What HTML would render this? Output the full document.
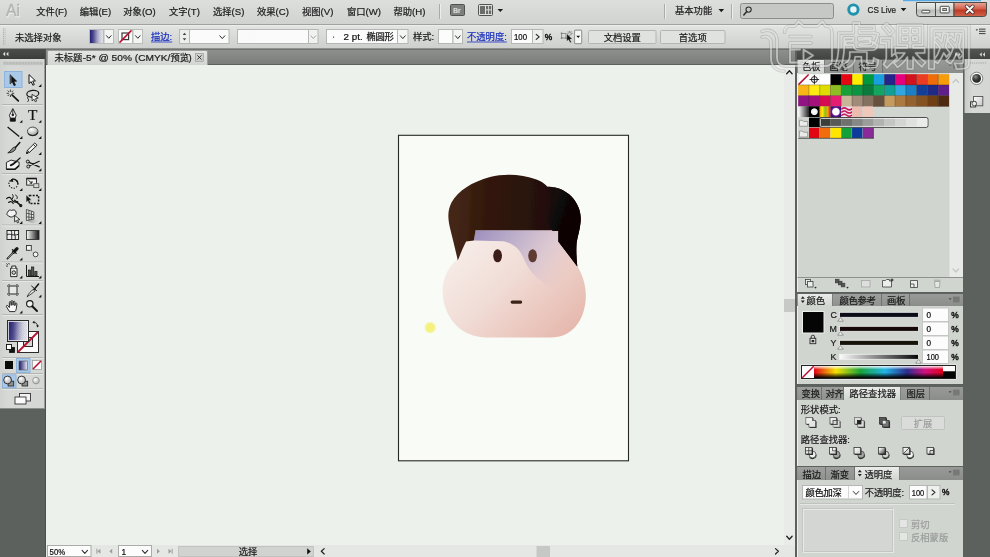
<!DOCTYPE html>
<html lang="zh-CN"><head><meta charset="utf-8"><title>Adobe Illustrator - 未标题-5* @ 50% (CMYK/预览)</title>
<style>
html,body{margin:0;padding:0;}
body{width:990px;height:557px;overflow:hidden;position:relative;background:#edf0ec;font-family:"Liberation Sans",sans-serif;font-size:9.3px;}
#app div{position:absolute;box-sizing:border-box;}
#ov{position:absolute;left:0;top:0;width:990px;height:557px;opacity:.999;will-change:transform;}
#ov text{font-family:"Liberation Sans","Noto Sans CJK SC",sans-serif;}
</style></head><body>
<div id="app">
<div style="left:0px;top:0px;width:990px;height:25px;background:linear-gradient(#dcdfdc,#d0d3d0);border-bottom:1px solid #9fa29f;"></div>
<div style="left:0px;top:25px;width:990px;height:24px;background:linear-gradient(#e1e4e1,#d3d6d3 70%,#cdd0cd);border-top:1px solid #eceeec;border-bottom:1px solid #8e918e;"></div>
<div style="left:0px;top:49px;width:797px;height:16px;background:linear-gradient(#8c8f8c,#838683 50%,#7a7d7a);border-top:1px solid #707370;border-bottom:1px solid #5c5f5c;"></div>
<div style="left:47px;top:50px;width:161px;height:15px;background:linear-gradient(#e2e5e2,#d2d5d2);border:1px solid #9b9e9b;border-bottom:none;border-radius:2px 2px 0 0;"></div>
<div style="left:47px;top:65px;width:737px;height:481px;background:#edf1ec;"></div>
<div style="left:784px;top:65px;width:11px;height:481px;background:#e8ebe7;"></div>
<div style="left:784px;top:299px;width:11px;height:12.5px;background:#c6c9c6;"></div>
<div style="left:795px;top:49px;width:2px;height:508px;background:#5d605d;"></div>
<div style="left:46px;top:545px;width:749px;height:12px;background:#e4e7e3;"></div>
<div style="left:797px;top:49px;width:193px;height:508px;background:#5d615d;"></div>
<div style="left:797px;top:49px;width:167px;height:10px;background:linear-gradient(#525552,#414441);"></div>
<div style="left:964px;top:49px;width:26px;height:10px;background:linear-gradient(#525552,#414441);border-left:1px solid #2e302e;"></div>
<div style="left:964px;top:59px;width:26px;height:54px;background:linear-gradient(90deg,#c9ccc9,#d6d9d6 30%,#d3d6d3);border-left:1px solid #8d908d;"></div>
<div style="left:797px;top:59px;width:166px;height:14px;background:linear-gradient(#979a97,#8a8d8a);border-top:1px solid #5f625f;"></div>
<div style="left:798px;top:60px;width:27px;height:13px;background:linear-gradient(#e9ece9,#d1d5d0);border-right:1px solid #7c7f7c;"></div>
<div style="left:825px;top:60px;width:29px;height:13px;background:linear-gradient(#9c9f9c,#8e918e);border-right:1px solid #6f726f;"></div>
<div style="left:854px;top:60px;width:29px;height:13px;background:linear-gradient(#9c9f9c,#8e918e);border-right:1px solid #6f726f;"></div>
<div style="left:797px;top:73px;width:166px;height:204px;background:#d1d5d0;border-left:1px solid #eef0ee;"></div>
<div style="left:949px;top:73px;width:14px;height:204px;background:#e7eae7;border-left:1px solid #dcdfdc;"></div>
<div style="left:797px;top:277px;width:166px;height:15px;background:#d1d5d0;border-top:1px solid #8e918e;border-left:1px solid #eef0ee;"></div>
<div style="left:797px;top:293px;width:166px;height:13px;background:linear-gradient(#979a97,#8a8d8a);border-top:1px solid #5f625f;"></div>
<div style="left:798px;top:294px;width:35px;height:12px;background:linear-gradient(#e9ece9,#d1d5d0);border-right:1px solid #7c7f7c;"></div>
<div style="left:833px;top:294px;width:49px;height:12px;background:linear-gradient(#9c9f9c,#8e918e);border-right:1px solid #6f726f;"></div>
<div style="left:882px;top:294px;width:28px;height:12px;background:linear-gradient(#9c9f9c,#8e918e);border-right:1px solid #6f726f;"></div>
<div style="left:797px;top:306px;width:166px;height:78px;background:#d1d5d0;border-left:1px solid #eef0ee;"></div>
<div style="left:797px;top:386px;width:166px;height:14px;background:linear-gradient(#979a97,#8a8d8a);border-top:1px solid #5f625f;"></div>
<div style="left:798px;top:387px;width:23.5px;height:13px;background:linear-gradient(#9c9f9c,#8e918e);border-right:1px solid #6f726f;"></div>
<div style="left:821.5px;top:387px;width:22.5px;height:13px;background:linear-gradient(#9c9f9c,#8e918e);border-right:1px solid #6f726f;"></div>
<div style="left:844px;top:387px;width:57px;height:13px;background:linear-gradient(#e9ece9,#d1d5d0);border-right:1px solid #7c7f7c;"></div>
<div style="left:901px;top:387px;width:28.5px;height:13px;background:linear-gradient(#9c9f9c,#8e918e);border-right:1px solid #6f726f;"></div>
<div style="left:797px;top:400px;width:166px;height:66px;background:#d1d5d0;border-left:1px solid #eef0ee;"></div>
<div style="left:797px;top:466px;width:166px;height:14px;background:linear-gradient(#979a97,#8a8d8a);border-top:1px solid #5f625f;"></div>
<div style="left:798px;top:467px;width:28px;height:13px;background:linear-gradient(#9c9f9c,#8e918e);border-right:1px solid #6f726f;"></div>
<div style="left:826px;top:467px;width:29px;height:13px;background:linear-gradient(#9c9f9c,#8e918e);border-right:1px solid #6f726f;"></div>
<div style="left:855px;top:467px;width:45px;height:13px;background:linear-gradient(#e9ece9,#d1d5d0);border-right:1px solid #7c7f7c;"></div>
<div style="left:797px;top:480px;width:166px;height:77px;background:#d1d5d0;border-left:1px solid #eef0ee;"></div>
<div style="left:0px;top:49px;width:46px;height:508px;background:#5d615d;border-right:1px solid #4c4f4c;"></div>
<div style="left:0px;top:49px;width:45px;height:10px;background:linear-gradient(#4a4d4a,#3a3d3a);"></div>
<div style="left:0px;top:59px;width:45px;height:349.5px;background:linear-gradient(90deg,#cfd2cf,#d6d9d6 20%,#d4d7d4);border-right:1px solid #9b9e9b;border-bottom:1px solid #8b8e8b;"></div>
</div>
<svg id="ov" width="990" height="557" viewBox="0 0 990 557">
<defs><linearGradient id="wb" x1="0" y1="0" x2="0" y2="1"><stop offset="0" stop-color="#eef0ee"/><stop offset=".48" stop-color="#d2d5d2"/><stop offset=".52" stop-color="#b9bcb9"/><stop offset="1" stop-color="#cfd2cf"/></linearGradient><linearGradient id="wc" x1="0" y1="0" x2="0" y2="1"><stop offset="0" stop-color="#e9a99b"/><stop offset=".45" stop-color="#d4604b"/><stop offset=".55" stop-color="#c03a25"/><stop offset="1" stop-color="#d0664f"/></linearGradient><linearGradient id="gn" x1="0" y1="0" x2="1" y2="0"><stop offset="0" stop-color="#1d1870"/><stop offset=".45" stop-color="#6d6aa3"/><stop offset="1" stop-color="#eeeeF4"/></linearGradient><pattern id="chk" width="2.400" height="2.400" patternUnits="userSpaceOnUse"><rect width="2.400" height="2.400" fill="#fff"/><rect width="1.200" height="1.200" fill="#b9bbc4"/><rect x="1.200" y="1.200" width="1.200" height="1.200" fill="#b9bbc4"/></pattern><linearGradient id="chkf" x1="0" x2="1"><stop offset=".25" stop-color="#fff" stop-opacity="0"/><stop offset="1" stop-color="#fff" stop-opacity="1"/></linearGradient><mask id="chkm" maskContentUnits="objectBoundingBox"><rect width="1" height="1" fill="url(#chkf)"/></mask><linearGradient id="skin" gradientUnits="userSpaceOnUse" x1="462" y1="236" x2="560" y2="340"><stop offset="0" stop-color="#f7eeea"/><stop offset=".45" stop-color="#f1dcd6"/><stop offset="1" stop-color="#e6b9ae"/></linearGradient><linearGradient id="hair" gradientUnits="userSpaceOnUse" x1="448" y1="210" x2="581" y2="215"><stop offset="0" stop-color="#452716"/><stop offset=".14" stop-color="#402312"/><stop offset=".2" stop-color="#361b0e"/><stop offset=".45" stop-color="#2d150b"/><stop offset=".72" stop-color="#251009"/><stop offset=".85" stop-color="#160a0a"/><stop offset="1" stop-color="#0c0606"/></linearGradient><radialGradient id="hairhi" gradientUnits="userSpaceOnUse" cx="500" cy="200" r="52" gradientTransform="translate(500 200) scale(1 .62) translate(-500 -200)"><stop offset="0" stop-color="#3a1b0c" stop-opacity=".0"/><stop offset=".8" stop-color="#2a1209" stop-opacity=".55"/><stop offset="1" stop-color="#2a1209" stop-opacity="0"/></radialGradient><linearGradient id="lav" gradientUnits="userSpaceOnUse" x1="476" y1="232" x2="560" y2="290"><stop offset="0" stop-color="#9e90be"/><stop offset=".35" stop-color="#bfb0cb"/><stop offset=".7" stop-color="#dac6d0" stop-opacity=".8"/><stop offset="1" stop-color="#e8c4c0" stop-opacity="0"/></linearGradient><linearGradient id="hairR" gradientUnits="userSpaceOnUse" x1="545" y1="205" x2="572" y2="215"><stop offset="0" stop-color="#190b0a" stop-opacity=".7"/><stop offset=".3" stop-color="#120808" stop-opacity=".95"/><stop offset="1" stop-color="#0a0505"/></linearGradient><radialGradient id="ydot"><stop offset="0" stop-color="#f4f078"/><stop offset=".7" stop-color="#f5f285"/><stop offset="1" stop-color="#f7f5b0" stop-opacity=".15"/></radialGradient><filter id="soft" x="-5%" y="-5%" width="110%" height="110%"><feGaussianBlur stdDeviation=".45"/></filter><radialGradient id="sph" cx=".38" cy=".32" r=".75"><stop offset="0" stop-color="#8e918e"/><stop offset=".45" stop-color="#3c3e3c"/><stop offset="1" stop-color="#151515"/></radialGradient><linearGradient id="dk2" x1="0" y1="0" x2="1" y2="1"><stop offset="0" stop-color="#ffffff"/><stop offset="1" stop-color="#c3c6c3"/></linearGradient><linearGradient id="s41" x1="0" x2="1"><stop offset="0" stop-color="#fff"/><stop offset="1" stop-color="#222"/></linearGradient><radialGradient id="s42"><stop offset="0" stop-color="#fff"/><stop offset=".55" stop-color="#f0f0f0"/><stop offset=".7" stop-color="#000"/><stop offset="1" stop-color="#000"/></radialGradient><linearGradient id="s43" x1="0" x2="1"><stop offset="0" stop-color="#f7a600"/><stop offset=".25" stop-color="#fdea10"/><stop offset=".5" stop-color="#8dbd22"/><stop offset=".75" stop-color="#f7a600"/><stop offset="1" stop-color="#e2001a"/></linearGradient><radialGradient id="s44"><stop offset="0" stop-color="#fff"/><stop offset=".6" stop-color="#fff"/><stop offset=".8" stop-color="#6a1a96"/><stop offset="1" stop-color="#3c0f74"/></radialGradient><linearGradient id="kk" x1="0" x2="1"><stop offset="0" stop-color="#fcfcfc"/><stop offset="1" stop-color="#050505"/></linearGradient><linearGradient id="spec" x1="0" x2="1"><stop offset="0" stop-color="#e2001a"/><stop offset=".17" stop-color="#f5e100"/><stop offset=".36" stop-color="#19a33a"/><stop offset=".55" stop-color="#21b4e6"/><stop offset=".72" stop-color="#2b2e8c"/><stop offset=".86" stop-color="#d1117f"/><stop offset="1" stop-color="#e2001a"/></linearGradient><linearGradient id="specv" x1="0" x2="0" y1="0" y2="1"><stop offset="0" stop-color="#fff" stop-opacity=".9"/><stop offset=".3" stop-color="#fff" stop-opacity="0"/><stop offset=".55" stop-color="#000" stop-opacity="0"/><stop offset="1" stop-color="#000" stop-opacity="1"/></linearGradient><linearGradient id="sqg" x1="0" y1="0" x2="1" y2="1"><stop offset="0" stop-color="#ffffff"/><stop offset="1" stop-color="#c9ccc9"/></linearGradient><linearGradient id="crp" x1="0" y1="0" x2="1" y2="1"><stop offset=".2" stop-color="#f4f4f4"/><stop offset="1" stop-color="#333"/></linearGradient><linearGradient id="arr" x1="0" x2="1"><stop offset="0" stop-color="#777"/><stop offset=".35" stop-color="#111"/></linearGradient><radialGradient id="ell" cx=".38" cy=".3" r=".8"><stop offset="0" stop-color="#ffffff"/><stop offset=".55" stop-color="#c8cac8"/><stop offset="1" stop-color="#7e807e"/></radialGradient><linearGradient id="pgf" x1="0" x2="1"><stop offset="0" stop-color="#8a8c8a"/><stop offset="1" stop-color="#c9ccc9" stop-opacity=".2"/></linearGradient><linearGradient id="tg" x1="0" x2="1"><stop offset="0" stop-color="#fdfdfd"/><stop offset="1" stop-color="#111"/></linearGradient><linearGradient id="gf" x1="0" y1=".1" x2="1" y2=".2"><stop offset="0" stop-color="#1a1668"/><stop offset=".4" stop-color="#5a5796"/><stop offset=".8" stop-color="#c8c7dc"/><stop offset="1" stop-color="#eeeef4"/></linearGradient><linearGradient id="gb" x1="0" x2="1"><stop offset="0" stop-color="#1a1668"/><stop offset="1" stop-color="#eeeef4"/></linearGradient><radialGradient id="dm" cx=".35" cy=".3" r=".8"><stop offset="0" stop-color="#fff"/><stop offset="1" stop-color="#a9aba9"/></radialGradient></defs>
<text x="6.6" y="16.9" font-size="16" fill="#f3f5f3" stroke="#f3f5f3" stroke-width=".5" textLength="14" lengthAdjust="spacingAndGlyphs">Ai</text>
<text x="6" y="16.3" font-size="16" fill="#b3b6b3" stroke="#b3b6b3" stroke-width=".5" textLength="14" lengthAdjust="spacingAndGlyphs">Ai</text>
<g fill="#1c1c1c"><text x="36.30 45.60" y="15.40" font-size="9.3" stroke="#1c1c1c" stroke-width=".22">文件</text><text x="54.90" y="15.40" font-size="9.6" stroke="#1c1c1c" stroke-width=".22" xml:space="preserve">(F)</text></g>
<g fill="#1c1c1c"><text x="79.80 89.10" y="15.40" font-size="9.3" stroke="#1c1c1c" stroke-width=".22">编辑</text><text x="98.40" y="15.40" font-size="9.6" stroke="#1c1c1c" stroke-width=".22" xml:space="preserve">(E)</text></g>
<g fill="#1c1c1c"><text x="123.30 132.60" y="15.40" font-size="9.3" stroke="#1c1c1c" stroke-width=".22">对象</text><text x="141.90" y="15.40" font-size="9.6" stroke="#1c1c1c" stroke-width=".22" xml:space="preserve">(O)</text></g>
<g fill="#1c1c1c"><text x="169.00 178.30" y="15.40" font-size="9.3" stroke="#1c1c1c" stroke-width=".22">文字</text><text x="187.60" y="15.40" font-size="9.6" stroke="#1c1c1c" stroke-width=".22" xml:space="preserve">(T)</text></g>
<g fill="#1c1c1c"><text x="213.00 222.30" y="15.40" font-size="9.3" stroke="#1c1c1c" stroke-width=".22">选择</text><text x="231.60" y="15.40" font-size="9.6" stroke="#1c1c1c" stroke-width=".22" xml:space="preserve">(S)</text></g>
<g fill="#1c1c1c"><text x="257.00 266.30" y="15.40" font-size="9.3" stroke="#1c1c1c" stroke-width=".22">效果</text><text x="275.60" y="15.40" font-size="9.6" stroke="#1c1c1c" stroke-width=".22" xml:space="preserve">(C)</text></g>
<g fill="#1c1c1c"><text x="302.00 311.30" y="15.40" font-size="9.3" stroke="#1c1c1c" stroke-width=".22">视图</text><text x="320.60" y="15.40" font-size="9.6" stroke="#1c1c1c" stroke-width=".22" xml:space="preserve">(V)</text></g>
<g fill="#1c1c1c"><text x="347.00 356.30" y="15.40" font-size="9.3" stroke="#1c1c1c" stroke-width=".22">窗口</text><text x="365.60" y="15.40" font-size="9.6" stroke="#1c1c1c" stroke-width=".22" xml:space="preserve">(W)</text></g>
<g fill="#1c1c1c"><text x="393.50 402.80" y="15.40" font-size="9.3" stroke="#1c1c1c" stroke-width=".22">帮助</text><text x="412.10" y="15.40" font-size="9.6" stroke="#1c1c1c" stroke-width=".22" xml:space="preserve">(H)</text></g>
<line x1="439.5" y1="4" x2="439.5" y2="19" stroke="#a9aca9" stroke-width="1"/>
<line x1="440.5" y1="4" x2="440.5" y2="19" stroke="#eceeec" stroke-width="1"/>
<line x1="664.5" y1="4" x2="664.5" y2="19" stroke="#a9aca9" stroke-width="1"/>
<line x1="665.5" y1="4" x2="665.5" y2="19" stroke="#eceeec" stroke-width="1"/>
<line x1="731.5" y1="4" x2="731.5" y2="19" stroke="#a9aca9" stroke-width="1"/>
<line x1="732.5" y1="4" x2="732.5" y2="19" stroke="#eceeec" stroke-width="1"/>
<rect x="450.5" y="4.5" width="14" height="11" fill="#7d807d" stroke="#4f524f" stroke-width="1" rx="1"/>
<text x="453.2" y="13" font-size="6.5" font-weight="bold" fill="#d9dcd9" stroke="#d9dcd9" stroke-width=".22">Br</text>
<rect x="478.5" y="4.5" width="14" height="11" fill="#dfe2df" stroke="#4f524f" stroke-width="1" rx="1"/>
<rect x="480" y="6" width="5" height="8" fill="#6a6d6a"/>
<rect x="486" y="6" width="2.2" height="3.4" fill="#6a6d6a"/>
<rect x="489" y="6" width="2.2" height="3.4" fill="#6a6d6a"/>
<rect x="486" y="10.4" width="2.2" height="3.6" fill="#6a6d6a"/>
<rect x="489" y="10.4" width="2.2" height="3.6" fill="#6a6d6a"/>
<path d="M497.50 8.90H503.10L500.30 12.10Z" fill="#1a1a1a"/>
<g fill="#1c1c1c"><text x="675.00 684.30 693.60 702.90" y="13.80" font-size="9.3" stroke="#1c1c1c" stroke-width=".22">基本功能</text></g>
<path d="M718.50 9.00H724.10L721.30 12.20Z" fill="#1a1a1a"/>
<rect x="740.5" y="3.5" width="93" height="15" fill="#c5c8c5" stroke="#8b8e8b" stroke-width="1" rx="2"/>
<circle cx="748.6" cy="9.6" r="2.6" fill="none" stroke="#2b2b2b" stroke-width="1.1"/><path d="M746.6 11.8L743.8 15" stroke="#2b2b2b" stroke-width="1.5" stroke-linecap="round"/>
<circle cx="853.4" cy="9.6" r="4.7" fill="#e9f3f5" stroke="#1f93ad" stroke-width="2.9"/>
<text x="867.5" y="13.2" font-size="9.6" fill="#1c1c1c" textLength="28.6" lengthAdjust="spacingAndGlyphs" stroke="#1c1c1c" stroke-width=".22">CS Live</text>
<path d="M900.60 8.00H906.40L903.50 11.20Z" fill="#1a1a1a"/>
<rect x="903" y="0" width="78" height="1.2" fill="#55a9e4"/>
<path d="M916.5 2.5h37.5v14h-34.5a3 3 0 0 1-3-3z" fill="url(#wb)" stroke="#4b4e4b"/>
<path d="M954 2.5h32.5v11a3 3 0 0 1-3 3h-29.500z" fill="url(#wc)" stroke="#4b4e4b"/>
<line x1="935.5" y1="3" x2="935.5" y2="16" stroke="#4b4e4b" stroke-width="1"/>
<rect x="921.8" y="10.3" width="8" height="2.6" fill="#f6f7f6" stroke="#3a3c3a" stroke-width="0.9" rx="0.8"/>
<rect x="940.2" y="6.3" width="9" height="6.6" fill="#f6f7f6" stroke="#3a3c3a" stroke-width="0.9" rx="0.8"/>
<rect x="942.8" y="8.6" width="3.8" height="2" fill="#c9ccc9" stroke="#3a3c3a" stroke-width="0.8"/>
<path d="M966.6 6.3l6.2 6.2M972.800 6.3l-6.2 6.2" stroke="#3d2a27" stroke-width="3.6" stroke-linecap="round"/><path d="M966.6 6.3l6.2 6.2M972.800 6.3l-6.2 6.2" stroke="#fbfbfb" stroke-width="2" stroke-linecap="round"/>
<rect x="3" y="28.4" width="1.1" height="1" fill="#a9aca9"/>
<rect x="4.6" y="28.4" width="1.1" height="1" fill="#bcbfbc"/>
<rect x="3" y="30.299999999999997" width="1.1" height="1" fill="#a9aca9"/>
<rect x="4.6" y="30.299999999999997" width="1.1" height="1" fill="#bcbfbc"/>
<rect x="3" y="32.199999999999996" width="1.1" height="1" fill="#a9aca9"/>
<rect x="4.6" y="32.199999999999996" width="1.1" height="1" fill="#bcbfbc"/>
<rect x="3" y="34.099999999999994" width="1.1" height="1" fill="#a9aca9"/>
<rect x="4.6" y="34.099999999999994" width="1.1" height="1" fill="#bcbfbc"/>
<rect x="3" y="36.0" width="1.1" height="1" fill="#a9aca9"/>
<rect x="4.6" y="36.0" width="1.1" height="1" fill="#bcbfbc"/>
<rect x="3" y="37.9" width="1.1" height="1" fill="#a9aca9"/>
<rect x="4.6" y="37.9" width="1.1" height="1" fill="#bcbfbc"/>
<rect x="3" y="39.8" width="1.1" height="1" fill="#a9aca9"/>
<rect x="4.6" y="39.8" width="1.1" height="1" fill="#bcbfbc"/>
<rect x="3" y="41.699999999999996" width="1.1" height="1" fill="#a9aca9"/>
<rect x="4.6" y="41.699999999999996" width="1.1" height="1" fill="#bcbfbc"/>
<rect x="3" y="43.599999999999994" width="1.1" height="1" fill="#a9aca9"/>
<rect x="4.6" y="43.599999999999994" width="1.1" height="1" fill="#bcbfbc"/>
<g fill="#1c1c1c"><text x="15.00 24.30 33.60 42.90 52.20" y="40.60" font-size="9.3" stroke="#1c1c1c" stroke-width=".22">未选择对象</text></g>
<rect x="89.5" y="29.5" width="14" height="14" fill="url(#gn)" stroke="#b9bcb9" stroke-width="1"/>
<rect x="90" y="30" width="13" height="13" fill="url(#chk)" mask="url(#chkm)" opacity=".8"/>
<rect x="104" y="29.5" width="9.5" height="14" fill="#f4f6f4" stroke="#b9bcb9" stroke-width="1"/>
<path d="M106.50 35.70L108.80 38.30L111.10 35.70" fill="none" stroke="#2a2a2a" stroke-width="1.0" stroke-linecap="round" stroke-linejoin="round"/>
<rect x="118.5" y="29.5" width="14" height="14" fill="#fbfcfb" stroke="#b9bcb9" stroke-width="1"/>
<rect x="122" y="33" width="6.6" height="6.6" fill="none" stroke="#3a3a3a" stroke-width="1.2"/>
<line x1="119.5" y1="42.6" x2="131.5" y2="30.4" stroke="#b80f2e" stroke-width="1.5"/>
<rect x="133" y="29.5" width="9.5" height="14" fill="#f4f6f4" stroke="#b9bcb9" stroke-width="1"/>
<path d="M135.50 35.70L137.80 38.30L140.10 35.70" fill="none" stroke="#2a2a2a" stroke-width="1.0" stroke-linecap="round" stroke-linejoin="round"/>
<g fill="#1b2fc0"><text x="151.00 160.30" y="40.40" font-size="9.3" stroke="#1b2fc0" stroke-width=".22">描边</text><text x="169.60" y="40.40" font-size="9.3" stroke="#1b2fc0" stroke-width=".22" xml:space="preserve">:</text><rect x="151.00" y="41.60" width="21.18" height="0.8"/></g>
<rect x="179.5" y="29.5" width="10" height="14" fill="#eef0ee" stroke="#b4b7b4" stroke-width="1"/>
<path d="M182.700 35l1.800-2.200 1.800 2.200zM182.700 38.2l1.800 2.200 1.800-2.200z" fill="#444"/>
<rect x="189.5" y="29.5" width="39.5" height="14" fill="#fbfcfb" stroke="#b4b7b4" stroke-width="1"/>
<path d="M219.80 35.80L222.30 38.60L224.80 35.80" fill="none" stroke="#2a2a2a" stroke-width="1.0" stroke-linecap="round" stroke-linejoin="round"/>
<rect x="237.5" y="29.5" width="71" height="14" fill="#fafbfa" stroke="#b4b7b4" stroke-width="1"/>
<rect x="308.5" y="29.5" width="9.5" height="14" fill="#f0f2f0" stroke="#b4b7b4" stroke-width="1"/>
<path d="M311.00 35.90L313.30 38.50L315.60 35.90" fill="none" stroke="#a4a7a4" stroke-width="1.0" stroke-linecap="round" stroke-linejoin="round"/>
<rect x="326.5" y="29.5" width="71" height="14" fill="#fbfcfb" stroke="#b4b7b4" stroke-width="1"/>
<rect x="333" y="36.6" width="1.1" height="1.1" fill="#333"/>
<g fill="#111"><text x="343.60" y="40.30" font-size="9.8" stroke="#111" stroke-width=".22" xml:space="preserve">2 pt. </text></g>
<g fill="#111"><text x="366.40 375.42 384.44" y="40.40" font-size="9.3" stroke="#111" stroke-width=".22">椭圆形</text></g>
<rect x="397.5" y="29.5" width="10.5" height="14" fill="#f4f6f4" stroke="#b4b7b4" stroke-width="1"/>
<path d="M400.40 35.80L402.80 38.60L405.20 35.80" fill="none" stroke="#2a2a2a" stroke-width="1.0" stroke-linecap="round" stroke-linejoin="round"/>
<g fill="#1c1c1c"><text x="413.00 422.30" y="40.40" font-size="9.3" stroke="#1c1c1c" stroke-width=".22">样式</text><text x="431.60" y="40.40" font-size="9.3" stroke="#1c1c1c" stroke-width=".22" xml:space="preserve">:</text></g>
<rect x="438.5" y="29.5" width="14.5" height="14" fill="#fbfcfb" stroke="#b4b7b4" stroke-width="1"/>
<rect x="453" y="29.5" width="9.5" height="14" fill="#f4f6f4" stroke="#b4b7b4" stroke-width="1"/>
<path d="M455.50 35.80L457.80 38.60L460.10 35.80" fill="none" stroke="#2a2a2a" stroke-width="1.0" stroke-linecap="round" stroke-linejoin="round"/>
<g fill="#1b2fc0"><text x="467.00 476.30 485.60 494.90" y="40.40" font-size="9.3" stroke="#1b2fc0" stroke-width=".22">不透明度</text><text x="504.20" y="40.40" font-size="9.3" stroke="#1b2fc0" stroke-width=".22" xml:space="preserve">:</text><rect x="467.00" y="41.60" width="39.78" height="0.8"/></g>
<rect x="511.5" y="29.5" width="21" height="14" fill="#fbfcfb" stroke="#b4b7b4" stroke-width="1"/>
<text x="514" y="40" font-size="8.2" fill="#111" textLength="13" lengthAdjust="spacingAndGlyphs" stroke="#111" stroke-width=".22">100</text>
<rect x="532.5" y="29.5" width="10.5" height="14" fill="#eef0ee" stroke="#b4b7b4" stroke-width="1"/>
<path d="M536.2 34.4l3 2.500-3 2.500" fill="none" stroke="#222" stroke-width="1.1" stroke-linecap="round" stroke-linejoin="round"/>
<text x="544.800" y="40" font-size="8.400" fill="#111" stroke="#111" stroke-width=".45">%</text>
<g fill="none" stroke="#8a8d8a" stroke-width=".9"><rect x="561.600" y="33.400" width="4.400" height="4.600"/></g><g fill="#777"><rect x="560.800" y="32.600" width="1.500" height="1.500"/><rect x="560.800" y="37.400" width="1.500" height="1.500"/><rect x="565.400" y="37.400" width="1.500" height="1.500"/></g><g stroke="#666" stroke-width=".8"><path d="M569.700 30.800v2M569.700 34.600v1.200M567.300 33.300h1.400M570.800 33.300h1.700M568 31.500l1 1M571.500 31.500l-1 1M571.500 35l-1-1"/></g><path d="M566.800 33.800l5.400 5.200-2.300.2 1.500 3-1.300.6-1.500-3-1.800 1.500z" fill="#111" stroke="#eee" stroke-width=".3"/>
<rect x="574.5" y="30.2" width="7.2" height="13.4" fill="#f6f8f6" stroke="#9a9d9a" stroke-width="1.2" rx="1"/>
<path d="M576.30 35.70H580.10L578.20 38.10Z" fill="#111"/>
<rect x="588.5" y="30.5" width="67.5" height="13" fill="#dfe2df" stroke="#b3b6b3" stroke-width="1" rx="1"/>
<g fill="#1c1c1c"><text x="603.65 612.95 622.25 631.55" y="40.60" font-size="9.3" stroke="#1c1c1c" stroke-width=".22">文档设置</text></g>
<rect x="660.5" y="30.5" width="64.5" height="13" fill="#dfe2df" stroke="#b3b6b3" stroke-width="1" rx="1"/>
<g fill="#1c1c1c"><text x="678.80 688.10 697.40" y="40.60" font-size="9.3" stroke="#1c1c1c" stroke-width=".22">首选项</text></g>
<g fill="#4a4d4a"><path d="M975.6 29.300h2.600l-1.300 1.700z"/><rect x="979" y="28.600" width="6.500" height="1.100"/><rect x="979" y="30.800" width="6.500" height="1.100"/><rect x="979" y="33" width="6.500" height="1.100"/></g>
<g fill="#1c1c1c"><text x="54.50 63.80 73.10" y="61.20" font-size="9.3" stroke="#1c1c1c" stroke-width=".22">未标题</text></g>
<text x="82.70" y="61" font-size="9.6" fill="#1c1c1c" textLength="87.60" lengthAdjust="spacingAndGlyphs" xml:space="preserve" stroke="#1c1c1c" stroke-width=".22">-5* @ 50% (CMYK/</text>
<g fill="#1c1c1c"><text x="170.50 179.80" y="61.20" font-size="9.3" stroke="#1c1c1c" stroke-width=".22">预览</text></g>
<text x="188.600" y="61" font-size="9.6" fill="#1c1c1c" stroke="#1c1c1c" stroke-width=".22">)</text>
<rect x="195.5" y="53.5" width="7.8" height="7.8" fill="#d0d3d0" stroke="#a3a6a3" stroke-width="0.9"/>
<path d="M197.3 55.3l4.200 4.200M201.500 55.3l-4.200 4.200" fill="none" stroke="#333" stroke-width="1"/>
<path d="M786.70 73.70L789.40 70.70L792.10 73.70" fill="none" stroke="#222" stroke-width="1.3" stroke-linecap="round" stroke-linejoin="round"/>
<path d="M786.70 536.30L789.40 539.30L792.10 536.30" fill="none" stroke="#222" stroke-width="1.3" stroke-linecap="round" stroke-linejoin="round"/>
<rect x="47.5" y="545.5" width="43.5" height="11" fill="#fbfcfb" stroke="#a9aca9" stroke-width="1"/>
<text x="49.600" y="554.600" font-size="8.300" fill="#111" textLength="15.500" lengthAdjust="spacingAndGlyphs" stroke="#111" stroke-width=".22">50%</text>
<path d="M82.10 550.30L84.80 553.30L87.50 550.30" fill="none" stroke="#333" stroke-width="1.1" stroke-linecap="round" stroke-linejoin="round"/>
<g fill="#9a9d9a"><path d="M96.400 548.800h1v5h-1zM100.400 548.800v5l-2.800-2.500zM112.200 548.800v5l-2.800-2.500zM157 548.800v5l2.800-2.500zM168.500 548.800v5l2.800-2.500zM171.600 548.800h1v5h-1z"/></g>
<rect x="118.5" y="545.5" width="33" height="11" fill="#fbfcfb" stroke="#a9aca9" stroke-width="1"/>
<text x="121.500" y="554.600" font-size="8.300" fill="#111" stroke="#111" stroke-width=".22">1</text>
<path d="M142.30 550.30L145.00 553.30L147.70 550.30" fill="none" stroke="#333" stroke-width="1.1" stroke-linecap="round" stroke-linejoin="round"/>
<rect x="178.5" y="546.5" width="135" height="10" fill="#d0d3d0" stroke="#c0c3c0" stroke-width="1"/>
<g fill="#1c1c1c"><text x="238.70 248.00" y="555.00" font-size="9.3" stroke="#1c1c1c" stroke-width=".22">选择</text></g>
<path d="M307.200 548.300v6.200l3.600-3.100z" fill="#111"/>
<path d="M324.200 548.600l-2.900 2.700 2.900 2.700" fill="none" stroke="#222" stroke-width="1.2" stroke-linecap="round" stroke-linejoin="round"/>
<rect x="536.5" y="546" width="13.5" height="11" fill="#c5c8c5"/>
<path d="M775.500 548.600l2.900 2.700-2.900 2.700" fill="none" stroke="#222" stroke-width="1.2" stroke-linecap="round" stroke-linejoin="round"/>
<rect x="398.5" y="135.3" width="230" height="325.5" fill="#f8fbf6" stroke="#262826" stroke-width="1.1"/>
<g filter="url(#soft)">
<path d="M476 229.500H558.500V240L577 265.500C583 275 586.300 287 585.800 298C584.500 322 571 337.500 551 337.500H487C461 337.500 443.500 318 442.600 292C442.300 280 447 268 457 259.500L466 241L474 240Z" fill="url(#skin)"/>
<path d="M475.500 230.300H558.500V240L577 265.500C582 274 585 284 585.500 292C575 296 556 292 541 281C531 273.500 527 266 523 257C519.500 249 514 243.500 503 241.200L474 240.500Z" fill="url(#lav)"/>
<path d="M457.800 260.500C455.500 250 452.500 238 450 228C447.600 218 447.600 210 451.500 202.500C458 190.500 472 182 490 177C504 173.500 522 174 536.500 179.500C541.500 181.500 545 184 547.500 186.800C556 186.300 565 190 571.500 196.500C578.500 204 581.500 213 580.600 222C580 230 577.500 236 576.600 243C576 251 576.500 259 577.300 266.500L558.300 241.500V231H552.800L552 230.300H475.600L473.900 240.600L466.100 241.500C463 247.500 460.500 254 457.800 260.500Z" fill="url(#hair)"/>
<path d="M546.800 220.500L552.800 231H558.300V241.500L577.300 266.500C576.500 259 576 251 576.600 243C577.500 236 580 230 580.600 222C581.500 213 578.500 204 571.500 196.500C565 190 556 186.300 547.500 186.800C552 196 551 208 546.800 220.500Z" fill="url(#hairR)"/>
<ellipse cx="497.600" cy="255.800" rx="4.400" ry="6.500" fill="#3b1d12"/>
<ellipse cx="532.600" cy="255.800" rx="4.400" ry="6.500" fill="#5e3a32"/>
<rect x="510.6" y="300.4" width="11.6" height="3.3" fill="#3a2418" rx="1.6"/>
</g>
<circle cx="430.200" cy="327.600" r="6.200" fill="url(#ydot)"/>
<g fill="#d5d8d5"><path d="M955.200 52.300l2.300 2.200-2.300 2.200zM958.400 52.300l2.300 2.200-2.300 2.200z"/><path d="M981.800 52.300l-2.300 2.200 2.300 2.200zM985 52.300l-2.300 2.200 2.300 2.200z"/></g>
<circle cx="976.600" cy="78.400" r="6.200" fill="#f6f7f6" stroke="#6a6d6a" stroke-width=".8"/><circle cx="976.600" cy="78.400" r="4.400" fill="url(#sph)"/>
<rect x="969.5" y="62.2" width="1.2" height="1.6" fill="#b4b7b4"/>
<rect x="971.7" y="62.2" width="1.2" height="1.6" fill="#b4b7b4"/>
<rect x="973.9" y="62.2" width="1.2" height="1.6" fill="#b4b7b4"/>
<rect x="976.1" y="62.2" width="1.2" height="1.6" fill="#b4b7b4"/>
<rect x="978.3" y="62.2" width="1.2" height="1.6" fill="#b4b7b4"/>
<rect x="980.5" y="62.2" width="1.2" height="1.6" fill="#b4b7b4"/>
<rect x="982.7" y="62.2" width="1.2" height="1.6" fill="#b4b7b4"/>
<rect x="984.9" y="62.2" width="1.2" height="1.6" fill="#b4b7b4"/>
<rect x="973.5" y="96.5" width="9.3" height="9.3" fill="url(#dk2)" stroke="#555" stroke-width="0.9"/>
<rect x="970.5" y="101.8" width="5.2" height="5.2" fill="#e6e8e6" stroke="#333" stroke-width="0.9"/>
<circle cx="974.300" cy="103.600" r="2.300" fill="#e9ebe9" stroke="#333" stroke-width=".8"/>
<g fill="#4a4d4a"><path d="M948.600 64.3h3l-1.500 1.800z"/></g>
<rect x="953" y="62.6" width="6.6" height="5.8" fill="#767976"/>
<g fill="#1c1c1c"><text x="802.00 811.30" y="70.20" font-size="9.3" stroke="#1c1c1c" stroke-width=".22">色板</text></g>
<g fill="#1c1c1c"><text x="829.50 838.80" y="70.20" font-size="9.3" stroke="#1c1c1c" stroke-width=".22">画笔</text></g>
<g fill="#1c1c1c"><text x="858.50 867.80" y="70.20" font-size="9.3" stroke="#1c1c1c" stroke-width=".22">符号</text></g>
<path d="M953.00 82.50L955.80 79.50L958.60 82.50" fill="none" stroke="#c3c6c3" stroke-width="1.2" stroke-linecap="round" stroke-linejoin="round"/>
<path d="M953.00 269.00L955.80 272.00L958.60 269.00" fill="none" stroke="#c3c6c3" stroke-width="1.2" stroke-linecap="round" stroke-linejoin="round"/>
<rect x="798.2" y="74.2" width="10.77" height="10.72" fill="#fbfcfb"/>
<line x1="798.5" y1="84.62" x2="808.6700000000001" y2="74.5" stroke="#b80f2e" stroke-width="1.5"/>
<rect x="808.97" y="74.2" width="10.77" height="10.72" fill="#fbfcfb"/>
<g stroke="#111" stroke-width=".9" fill="none"><circle cx="814.36" cy="79.56" r="3"/><path d="M814.36 74.80v9.52M809.57 79.56h9.57"/></g>
<rect x="819.74" y="74.20" width="10.87" height="10.82" fill="#ffffff"/>
<rect x="830.51" y="74.20" width="10.87" height="10.82" fill="#000000"/>
<rect x="841.28" y="74.20" width="10.87" height="10.82" fill="#e30613"/>
<rect x="852.05" y="74.20" width="10.87" height="10.82" fill="#ffed00"/>
<rect x="862.82" y="74.20" width="10.87" height="10.82" fill="#009640"/>
<rect x="873.59" y="74.20" width="10.87" height="10.82" fill="#179fe0"/>
<rect x="884.36" y="74.20" width="10.87" height="10.82" fill="#25248a"/>
<rect x="895.13" y="74.20" width="10.87" height="10.82" fill="#e5007e"/>
<rect x="905.90" y="74.20" width="10.87" height="10.82" fill="#d4111f"/>
<rect x="916.67" y="74.20" width="10.87" height="10.82" fill="#ea3c22"/>
<rect x="927.44" y="74.20" width="10.87" height="10.82" fill="#ee6c0b"/>
<rect x="938.21" y="74.20" width="10.87" height="10.82" fill="#f59c0a"/>
<rect x="798.20" y="84.92" width="10.87" height="10.82" fill="#f9b516"/>
<rect x="808.97" y="84.92" width="10.87" height="10.82" fill="#fdea10"/>
<rect x="819.74" y="84.92" width="10.87" height="10.82" fill="#dfdc00"/>
<rect x="830.51" y="84.92" width="10.87" height="10.82" fill="#8dbd22"/>
<rect x="841.28" y="84.92" width="10.87" height="10.82" fill="#19a139"/>
<rect x="852.05" y="84.92" width="10.87" height="10.82" fill="#0c9540"/>
<rect x="862.82" y="84.92" width="10.87" height="10.82" fill="#0a7b3c"/>
<rect x="873.59" y="84.92" width="10.87" height="10.82" fill="#14a561"/>
<rect x="884.36" y="84.92" width="10.87" height="10.82" fill="#0fa096"/>
<rect x="895.13" y="84.92" width="10.87" height="10.82" fill="#2fa6dd"/>
<rect x="905.90" y="84.92" width="10.87" height="10.82" fill="#1a7fc3"/>
<rect x="916.67" y="84.92" width="10.87" height="10.82" fill="#143f98"/>
<rect x="927.44" y="84.92" width="10.87" height="10.82" fill="#1f2a84"/>
<rect x="938.21" y="84.92" width="10.87" height="10.82" fill="#5e1f8b"/>
<rect x="798.20" y="95.64" width="10.87" height="10.82" fill="#8f1583"/>
<rect x="808.97" y="95.64" width="10.87" height="10.82" fill="#a5117a"/>
<rect x="819.74" y="95.64" width="10.87" height="10.82" fill="#d60b52"/>
<rect x="830.51" y="95.64" width="10.87" height="10.82" fill="#e61b72"/>
<rect x="841.28" y="95.64" width="10.87" height="10.82" fill="#c9b699"/>
<rect x="852.05" y="95.64" width="10.87" height="10.82" fill="#a08a78"/>
<rect x="862.82" y="95.64" width="10.87" height="10.82" fill="#85715f"/>
<rect x="873.59" y="95.64" width="10.87" height="10.82" fill="#68503f"/>
<rect x="884.36" y="95.64" width="10.87" height="10.82" fill="#c59a5f"/>
<rect x="895.13" y="95.64" width="10.87" height="10.82" fill="#ab7a41"/>
<rect x="905.90" y="95.64" width="10.87" height="10.82" fill="#94622c"/>
<rect x="916.67" y="95.64" width="10.87" height="10.82" fill="#855321"/>
<rect x="927.44" y="95.64" width="10.87" height="10.82" fill="#703f13"/>
<rect x="938.21" y="95.64" width="10.87" height="10.82" fill="#4d2a10"/>
<line x1="808.97" y1="84.92" x2="808.97" y2="106.36" stroke="#2a1a14" stroke-width="0.6" opacity=".5"/>
<line x1="819.74" y1="84.92" x2="819.74" y2="106.36" stroke="#2a1a14" stroke-width="0.6" opacity=".5"/>
<line x1="830.51" y1="84.92" x2="830.51" y2="106.36" stroke="#2a1a14" stroke-width="0.6" opacity=".5"/>
<line x1="841.28" y1="74.20" x2="841.28" y2="106.36" stroke="#2a1a14" stroke-width="0.6" opacity=".5"/>
<line x1="852.05" y1="74.20" x2="852.05" y2="106.36" stroke="#2a1a14" stroke-width="0.6" opacity=".5"/>
<line x1="862.82" y1="74.20" x2="862.82" y2="106.36" stroke="#2a1a14" stroke-width="0.6" opacity=".5"/>
<line x1="873.59" y1="74.20" x2="873.59" y2="106.36" stroke="#2a1a14" stroke-width="0.6" opacity=".5"/>
<line x1="884.36" y1="74.20" x2="884.36" y2="106.36" stroke="#2a1a14" stroke-width="0.6" opacity=".5"/>
<line x1="895.13" y1="74.20" x2="895.13" y2="106.36" stroke="#2a1a14" stroke-width="0.6" opacity=".5"/>
<line x1="905.90" y1="74.20" x2="905.90" y2="106.36" stroke="#2a1a14" stroke-width="0.6" opacity=".5"/>
<line x1="916.67" y1="74.20" x2="916.67" y2="106.36" stroke="#2a1a14" stroke-width="0.6" opacity=".5"/>
<line x1="927.44" y1="74.20" x2="927.44" y2="106.36" stroke="#2a1a14" stroke-width="0.6" opacity=".5"/>
<line x1="938.21" y1="74.20" x2="938.21" y2="106.36" stroke="#2a1a14" stroke-width="0.6" opacity=".5"/>
<line x1="798.20" y1="84.92" x2="948.98" y2="84.92" stroke="#2a1a14" stroke-width="0.6" opacity=".45"/>
<line x1="798.20" y1="95.64" x2="948.98" y2="95.64" stroke="#2a1a14" stroke-width="0.6" opacity=".45"/>
<line x1="798.20" y1="106.36" x2="948.98" y2="106.36" stroke="#2a1a14" stroke-width="0.6" opacity=".45"/>
<rect x="798.20" y="106.36" width="10.77" height="10.72" fill="url(#s41)"/>
<rect x="808.97" y="106.36" width="10.77" height="10.72" fill="url(#s42)"/>
<rect x="819.74" y="106.36" width="10.77" height="10.72" fill="url(#s43)"/>
<rect x="830.51" y="106.36" width="10.77" height="10.72" fill="url(#s44)"/>
<rect x="841.28" y="106.36" width="10.77" height="10.72" fill="#f3e3e8"/>
<g stroke="#c2185b" stroke-width="1.500" fill="none" stroke-linecap="round"><path d="M841.78 108.86q2.500-2 5 0t5 0M841.78 112.06q2.500-2 5 0t5 0M841.78 115.26q2.500-2 5 0t5 0"/></g>
<rect x="852.05" y="106.36" width="10.17" height="10.72" fill="#ecbcb0"/>
<rect x="862.82" y="106.36" width="10.17" height="10.72" fill="#efc8bc"/>
<path d="M799.40 120.28h3l1 1.200h4.300v4.800h-8.300z" fill="#e9ebe9" stroke="#8a8d8a" stroke-width=".8"/>
<rect x="808.97" y="117.68" width="10.87" height="9.520000000000001" fill="#000000"/>
<rect x="819.74" y="117.68" width="10.87" height="9.520000000000001" fill="#3c3e3c"/>
<rect x="830.51" y="117.68" width="10.87" height="9.520000000000001" fill="#585a58"/>
<rect x="841.28" y="117.68" width="10.87" height="9.520000000000001" fill="#6f716f"/>
<rect x="852.05" y="117.68" width="10.87" height="9.520000000000001" fill="#868886"/>
<rect x="862.82" y="117.68" width="10.87" height="9.520000000000001" fill="#9b9d9b"/>
<rect x="873.59" y="117.68" width="10.87" height="9.520000000000001" fill="#b1b3b1"/>
<rect x="884.36" y="117.68" width="10.87" height="9.520000000000001" fill="#c4c6c4"/>
<rect x="895.13" y="117.68" width="10.87" height="9.520000000000001" fill="#d3d5d3"/>
<rect x="905.90" y="117.68" width="10.87" height="9.520000000000001" fill="#dfe1df"/>
<rect x="916.67" y="117.68" width="10.87" height="9.520000000000001" fill="#eaecea"/>
<rect x="819.44" y="117.58" width="108.50" height="9.72" fill="none" stroke="#2e2e2e" stroke-width="0.9" rx="1.5"/>
<rect x="820.34" y="118.48" width="106.70" height="7.920000000000001" fill="none" stroke="#f4f5f4" stroke-width="0.8" rx="1"/>
<path d="M799.40 131.00h3l1 1.200h4.300v4.800h-8.300z" fill="#e9ebe9" stroke="#8a8d8a" stroke-width=".8"/>
<rect x="808.97" y="127.80" width="10.469999999999999" height="10.22" fill="#e30613"/>
<rect x="819.74" y="127.80" width="10.469999999999999" height="10.22" fill="#f26c0c"/>
<rect x="830.51" y="127.80" width="10.469999999999999" height="10.22" fill="#ffe600"/>
<rect x="841.28" y="127.80" width="10.469999999999999" height="10.22" fill="#12a038"/>
<rect x="852.05" y="127.80" width="10.469999999999999" height="10.22" fill="#0c3c9c"/>
<rect x="862.82" y="127.80" width="10.469999999999999" height="10.22" fill="#8a2a98"/>
<line x1="798.20" y1="138.32" x2="873.59" y2="138.32" stroke="#3a3c3a" stroke-width="0.8"/>
<line x1="873.39" y1="127.80" x2="873.39" y2="138.52" stroke="#3a3c3a" stroke-width="0.8"/>
<g fill="#eceeec" stroke="#3d403d" stroke-width=".8"><rect x="805.500" y="279.500" width="5" height="5"/><rect x="807.500" y="281.500" width="5.500" height="5.500"/><rect x="835.500" y="279.300" width="3.500" height="3.500" fill="#555"/><rect x="838.500" y="281.300" width="3.500" height="3.500" fill="#555"/><rect x="841.300" y="283.300" width="3.500" height="3.500" fill="#555"/><rect x="861.500" y="280.500" width="8.500" height="6.500" stroke="#a5a8a5" fill="#dcdfdc"/><path d="M882.500 287v-6.500h3l1-1h3v1.500h2v6z"/><path d="M910.500 280.500h7v7h-7z"/><path d="M910.500 284h3.500v3.500" fill="none"/><path d="M934.500 281.500h5.500l-.6 6h-4.300z" stroke="#9a9d9a" fill="#e4e6e4"/><path d="M934 280.200h6.500" stroke="#9a9d9a"/></g>
<path d="M814.800 287.300h1.400l-.7 1zM846.800 287.300h1.400l-.7 1z" fill="#111" stroke="#111" stroke-width=".6"/>
<path d="M892 278.500v3M890.500 280h3" stroke="#111" stroke-width=".9"/>
<g fill="#4a4d4a"><path d="M948.600 298.3h3l-1.500 1.800z"/></g>
<rect x="953" y="296.6" width="6.6" height="5.8" fill="#767976"/>
<path d="M800.800 298.700l2-2.500 2 2.500zM800.800 300.500l2 2.500 2-2.500z" fill="#222"/>
<g fill="#1c1c1c"><text x="806.50 815.80" y="303.60" font-size="9.3" stroke="#1c1c1c" stroke-width=".22">颜色</text></g>
<g fill="#1c1c1c"><text x="839.50 848.52 857.54 866.56" y="303.60" font-size="9.3" stroke="#1c1c1c" stroke-width=".22">颜色参考</text></g>
<g fill="#1c1c1c"><text x="887.00 896.30" y="303.60" font-size="9.3" stroke="#1c1c1c" stroke-width=".22">画板</text></g>
<rect x="802.5" y="311.5" width="21.5" height="21.5" fill="#050505" stroke="#eceeec" stroke-width="1"/>
<g stroke="#2a2a2a" stroke-width=".9" fill="#d9dbd9"><path d="M811.200 338.200v-1.300a1.700 1.700 0 0 1 3.400 0v1.300" fill="none"/><rect x="810" y="338.300" width="5.800" height="5.400"/><rect x="811.600" y="340" width="2.600" height="2.200" fill="#2a2a2a" stroke="none"/></g>
<text x="830.6" y="318.4" font-size="8.800" fill="#1c1c1c" stroke="#1c1c1c" stroke-width=".22">C</text>
<rect x="839.5" y="312.3" width="79" height="5" fill="#0b0d18" stroke="#f2f3f2" stroke-width="0.8"/>
<path d="M837.70 321.20l2.800-3.600 2.800 3.600z" fill="#f2f3f2" stroke="#777" stroke-width=".7"/>
<rect x="922.5" y="308" width="26" height="13.5" fill="#fbfcfb" stroke="#c4c7c4" stroke-width="1"/>
<text x="926.500" y="318.2" font-size="8.200" fill="#111" stroke="#111" stroke-width=".22">0</text>
<text x="951.300" y="318.2" font-size="8.400" fill="#111" stroke="#111" stroke-width=".45">%</text>
<text x="829.6" y="332.4" font-size="8.800" fill="#1c1c1c" stroke="#1c1c1c" stroke-width=".22">M</text>
<rect x="839.5" y="326.3" width="79" height="5" fill="#140808" stroke="#f2f3f2" stroke-width="0.8"/>
<path d="M837.70 335.20l2.800-3.600 2.800 3.600z" fill="#f2f3f2" stroke="#777" stroke-width=".7"/>
<rect x="922.5" y="322" width="26" height="13.5" fill="#fbfcfb" stroke="#c4c7c4" stroke-width="1"/>
<text x="926.500" y="332.2" font-size="8.200" fill="#111" stroke="#111" stroke-width=".22">0</text>
<text x="951.300" y="332.2" font-size="8.400" fill="#111" stroke="#111" stroke-width=".45">%</text>
<text x="830.6" y="346.4" font-size="8.800" fill="#1c1c1c" stroke="#1c1c1c" stroke-width=".22">Y</text>
<rect x="839.5" y="340.3" width="79" height="5" fill="#15130a" stroke="#f2f3f2" stroke-width="0.8"/>
<path d="M837.70 349.20l2.800-3.600 2.800 3.600z" fill="#f2f3f2" stroke="#777" stroke-width=".7"/>
<rect x="922.5" y="336" width="26" height="13.5" fill="#fbfcfb" stroke="#c4c7c4" stroke-width="1"/>
<text x="926.500" y="346.2" font-size="8.200" fill="#111" stroke="#111" stroke-width=".22">0</text>
<text x="951.300" y="346.2" font-size="8.400" fill="#111" stroke="#111" stroke-width=".45">%</text>
<text x="830.6" y="360.4" font-size="8.800" fill="#1c1c1c" stroke="#1c1c1c" stroke-width=".22">K</text>
<rect x="839.5" y="354.3" width="79" height="5" fill="url(#kk)" stroke="#f2f3f2" stroke-width="0.8"/>
<path d="M915.70 363.20l2.800-3.600 2.800 3.600z" fill="#f2f3f2" stroke="#777" stroke-width=".7"/>
<rect x="922.5" y="350" width="26" height="13.5" fill="#fbfcfb" stroke="#c4c7c4" stroke-width="1"/>
<text x="926.500" y="360.2" font-size="8.200" fill="#111" textLength="12.500" lengthAdjust="spacingAndGlyphs" stroke="#111" stroke-width=".22">100</text>
<text x="951.300" y="360.2" font-size="8.400" fill="#111" stroke="#111" stroke-width=".45">%</text>
<rect x="800.5" y="364.5" width="156" height="15" fill="#f2f3f2"/>
<rect x="801.5" y="365.5" width="154" height="13" fill="#111" stroke="#222" stroke-width="1"/>
<rect x="802" y="366" width="12" height="12" fill="#fbfcfb"/>
<line x1="802.3" y1="377.7" x2="813.7" y2="366.3" stroke="#b80f2e" stroke-width="1.5"/>
<rect x="814" y="366" width="129" height="12" fill="url(#spec)"/>
<rect x="814" y="366" width="129" height="12" fill="url(#specv)"/>
<rect x="943" y="366" width="12" height="5.5" fill="#fbfcfb"/>
<rect x="943" y="371.5" width="12" height="6.5" fill="#050505"/>
<g fill="#4a4d4a"><path d="M948.600 391.3h3l-1.500 1.800z"/></g>
<rect x="953" y="389.6" width="6.6" height="5.8" fill="#767976"/>
<g fill="#1c1c1c"><text x="801.50 810.80" y="397.30" font-size="9.3" stroke="#1c1c1c" stroke-width=".22">变换</text></g>
<g fill="#1c1c1c"><text x="825.50 834.34" y="397.30" font-size="9.3" stroke="#1c1c1c" stroke-width=".22">对齐</text></g>
<g fill="#1c1c1c"><text x="849.50 858.80 868.10 877.40 886.70" y="397.30" font-size="9.3" stroke="#1c1c1c" stroke-width=".22">路径查找器</text></g>
<g fill="#1c1c1c"><text x="906.50 915.80" y="397.30" font-size="9.3" stroke="#1c1c1c" stroke-width=".22">图层</text></g>
<g fill="#1c1c1c"><text x="800.80 810.10 819.40 828.70" y="412.80" font-size="9.3" stroke="#1c1c1c" stroke-width=".22">形状模式</text><text x="838.00" y="412.80" font-size="9.3" stroke="#1c1c1c" stroke-width=".22" xml:space="preserve">:</text></g>
<g fill="#1c1c1c"><text x="800.80 810.10 819.40 828.70 838.00" y="443.30" font-size="9.3" stroke="#1c1c1c" stroke-width=".22">路径查找器</text><text x="847.30" y="443.30" font-size="9.3" stroke="#1c1c1c" stroke-width=".22" xml:space="preserve">:</text></g>
<path d="M813.00 418.30V424.50H806.80" fill="none" stroke="#2c2c2c" stroke-width="1.1"/>
<rect x="806" y="417.5" width="6.5" height="6.5" fill="url(#sqg)" stroke="#444" stroke-width="0.8"/>
<path d="M816.00 421.30V427.50H809.80" fill="none" stroke="#2c2c2c" stroke-width="1.1"/>
<rect x="809" y="420.5" width="6.5" height="6.5" fill="url(#sqg)" stroke="#444" stroke-width="0.8"/>
<rect x="806.4" y="417.9" width="5.7" height="5.7" fill="#eceeec"/>
<rect x="809.4" y="420.9" width="5.7" height="5.7" fill="#e4e6e4"/>
<path d="M840.00 421.30V427.50H833.80" fill="none" stroke="#2c2c2c" stroke-width="1.1"/>
<rect x="833" y="420.5" width="6.5" height="6.5" fill="#dcdedc" stroke="#9a9d9a" stroke-width="0.8"/>
<path d="M837.00 418.30V424.50H830.80" fill="none" stroke="#2c2c2c" stroke-width="1.1"/>
<rect x="830" y="417.5" width="6.5" height="6.5" fill="url(#sqg)" stroke="#444" stroke-width="0.8"/>
<rect x="833" y="420.5" width="3.9" height="3.9" fill="#d3d6d3" stroke="#444" stroke-width="0.8"/>
<path d="M861.50 418.30V424.50H855.30" fill="none" stroke="#2c2c2c" stroke-width="1.1"/>
<rect x="854.5" y="417.5" width="6.5" height="6.5" fill="#dcdedc" stroke="#777" stroke-width="0.8"/>
<path d="M864.50 421.30V427.50H858.30" fill="none" stroke="#2c2c2c" stroke-width="1.1"/>
<rect x="857.5" y="420.5" width="6.5" height="6.5" fill="#dcdedc" stroke="#777" stroke-width="0.8"/>
<rect x="857.5" y="420.5" width="3.5" height="3.5" fill="#222" stroke="#222" stroke-width="0.8"/>
<path d="M886.50 418.30V424.50H880.30" fill="none" stroke="#2c2c2c" stroke-width="1.1"/>
<rect x="879.5" y="417.5" width="6.5" height="6.5" fill="#555" stroke="#333" stroke-width="0.8"/>
<path d="M889.50 421.30V427.50H883.30" fill="none" stroke="#2c2c2c" stroke-width="1.1"/>
<rect x="882.5" y="420.5" width="6.5" height="6.5" fill="#777" stroke="#333" stroke-width="0.8"/>
<rect x="882.5" y="420.5" width="3.5" height="3.5" fill="#e6e8e6" stroke="#555" stroke-width="0.6"/>
<rect x="901.5" y="416.5" width="43" height="13" fill="#d9dcd9" stroke="#c0c3c0" stroke-width="1" rx="1"/>
<g fill="#9c9f9c"><text x="913.70 923.00" y="426.70" font-size="9.3" stroke="#9c9f9c" stroke-width=".22">扩展</text></g>
<path d="M809.70 457.10a3.500 3.500 0 0 0 6.200-2.600" fill="none" stroke="#2c2c2c" stroke-width="1.300"/>
<circle cx="812.5" cy="454.5" r="3.400" fill="#f1f2f1" stroke="#444" stroke-width=".8"/>
<path d="M812.50 448.30V454.50H806.30" fill="none" stroke="#2c2c2c" stroke-width="1.1"/>
<rect x="805.5" y="447.5" width="6.5" height="6.5" fill="url(#sqg)" stroke="#333" stroke-width="0.8"/>
<line x1="808.7" y1="447.5" x2="808.7" y2="454.0" stroke="#333" stroke-width="0.7"/>
<line x1="805.5" y1="450.7" x2="812.0" y2="450.7" stroke="#333" stroke-width="0.7"/>
<path d="M833.70 457.10a3.500 3.500 0 0 0 6.200-2.600" fill="none" stroke="#2c2c2c" stroke-width="1.300"/>
<circle cx="836.5" cy="454.5" r="3.400" fill="#a4a7a4" stroke="#444" stroke-width=".8"/>
<path d="M836.50 448.30V454.50H830.30" fill="none" stroke="#2c2c2c" stroke-width="1.1"/>
<rect x="829.5" y="447.5" width="6.5" height="6.5" fill="url(#sqg)" stroke="#333" stroke-width="0.8"/>
<rect x="832.7" y="447.5" width="3.3" height="3.3" fill="#f3f4f3" stroke="#333" stroke-width="0.7"/>
<path d="M858.20 457.10a3.500 3.500 0 0 0 6.200-2.600" fill="none" stroke="#2c2c2c" stroke-width="1.300"/>
<circle cx="861" cy="454.5" r="3.400" fill="#a4a7a4" stroke="#444" stroke-width=".8"/>
<path d="M861.00 448.30V454.50H854.80" fill="none" stroke="#2c2c2c" stroke-width="1.1"/>
<rect x="854" y="447.5" width="6.5" height="6.5" fill="url(#sqg)" stroke="#333" stroke-width="0.8"/>
<path d="M882.70 457.10a3.500 3.500 0 0 0 6.200-2.600" fill="none" stroke="#2c2c2c" stroke-width="1.300"/>
<circle cx="885.5" cy="454.5" r="3.400" fill="#d1d5d0" stroke="#444" stroke-width=".8"/>
<path d="M885.50 448.30V454.50H879.30" fill="none" stroke="#2c2c2c" stroke-width="1.1"/>
<rect x="878.5" y="447.5" width="6.5" height="6.5" fill="url(#crp)" stroke="#333" stroke-width="0.8"/>
<path d="M907.20 457.10a3.500 3.500 0 0 0 6.200-2.600" fill="none" stroke="#2c2c2c" stroke-width="1.300"/>
<circle cx="910" cy="454.5" r="3.400" fill="#f6f7f6" stroke="#444" stroke-width=".8"/>
<path d="M910.00 448.30V454.50H903.80" fill="none" stroke="#2c2c2c" stroke-width="1.1"/>
<rect x="903" y="447.5" width="6.5" height="6.5" fill="url(#sqg)" stroke="#333" stroke-width="0.8"/>
<line x1="903" y1="454.0" x2="909.5" y2="447.5" stroke="#333" stroke-width="0.8"/>
<path d="M934.00 448.30V454.50H927.80" fill="none" stroke="#2c2c2c" stroke-width="1.1"/>
<rect x="927" y="447.5" width="6.5" height="6.5" fill="url(#sqg)" stroke="#333" stroke-width="0.8"/>
<path d="M930 454.0V450.5H933.5" fill="none" stroke="#333" stroke-width="0.8"/>
<g fill="#4a4d4a"><path d="M948.600 471.3h3l-1.500 1.800z"/></g>
<rect x="953" y="469.6" width="6.6" height="5.8" fill="#767976"/>
<g fill="#1c1c1c"><text x="802.50 811.80" y="477.50" font-size="9.3" stroke="#1c1c1c" stroke-width=".22">描边</text></g>
<g fill="#1c1c1c"><text x="830.50 839.80" y="477.50" font-size="9.3" stroke="#1c1c1c" stroke-width=".22">渐变</text></g>
<path d="M857.800 472.200l2-2.500 2 2.500zM857.800 474l2 2.500 2-2.500z" fill="#222"/>
<g fill="#1c1c1c"><text x="864.50 873.80 883.10" y="477.50" font-size="9.3" stroke="#1c1c1c" stroke-width=".22">透明度</text></g>
<rect x="802.5" y="485.5" width="60" height="13.5" fill="#fbfcfb" stroke="#b4b7b4" stroke-width="1"/>
<line x1="848.5" y1="486" x2="848.5" y2="499" stroke="#d3d6d3" stroke-width="1"/>
<g fill="#111"><text x="805.50 814.52 823.54 832.56" y="496.30" font-size="9.3" stroke="#111" stroke-width=".22">颜色加深</text></g>
<path d="M853.30 491.50L856.00 494.50L858.70 491.50" fill="none" stroke="#333" stroke-width="1" stroke-linecap="round" stroke-linejoin="round"/>
<g fill="#1c1c1c"><text x="864.80 873.96 883.12 892.28" y="496.30" font-size="9.3" stroke="#1c1c1c" stroke-width=".22">不透明度</text><text x="901.44" y="496.30" font-size="9.3" stroke="#1c1c1c" stroke-width=".22" xml:space="preserve">:</text></g>
<rect x="909.5" y="485.5" width="17.5" height="13.5" fill="#fbfcfb" stroke="#b4b7b4" stroke-width="1"/>
<text x="911.800" y="495.800" font-size="8.200" fill="#111" textLength="12.500" lengthAdjust="spacingAndGlyphs" stroke="#111" stroke-width=".22">100</text>
<rect x="927.5" y="485.5" width="12.5" height="13.5" fill="#eef0ee" stroke="#b4b7b4" stroke-width="1"/>
<path d="M932 489.800l3 2.500-3 2.500" fill="none" stroke="#222" stroke-width="1.1" stroke-linecap="round" stroke-linejoin="round"/>
<text x="942" y="495" font-size="8.400" fill="#111" stroke="#111" stroke-width=".45">%</text>
<line x1="800" y1="503.5" x2="955" y2="503.5" stroke="#bfc2bf" stroke-width="1"/>
<line x1="800" y1="504.5" x2="955" y2="504.5" stroke="#e3e6e3" stroke-width="1"/>
<rect x="802.5" y="508.5" width="90" height="43" fill="#d3d6d3" stroke="#c3c6c3" stroke-width="1"/>
<rect x="803.5" y="509.5" width="90" height="43" fill="none" stroke="#e6e9e6" stroke-width="1"/>
<rect x="899.5" y="519.5" width="8" height="8" fill="#e3e6e3" stroke="#c6c9c6" stroke-width="1"/>
<g fill="#9a9d9a"><text x="911.00 920.30" y="527.60" font-size="9.3" stroke="#9a9d9a" stroke-width=".22">剪切</text></g>
<rect x="899.5" y="532.5" width="8" height="8" fill="#e3e6e3" stroke="#c6c9c6" stroke-width="1"/>
<g fill="#9a9d9a"><text x="911.00 920.30 929.60 938.90" y="540.60" font-size="9.3" stroke="#9a9d9a" stroke-width=".22">反相蒙版</text></g>
<g fill="#dcdfdc"><path d="M5.200 51.800l-2.300 2.200 2.300 2.200zM8.400 51.800l-2.300 2.200 2.300 2.200z"/></g>
<rect x="3" y="61.5" width="40" height="3.6" fill="#c3c6c3"/>
<rect x="4" y="62.4" width="1.5" height="1.8" fill="#b3b6b3"/>
<rect x="7" y="62.4" width="1.5" height="1.8" fill="#b3b6b3"/>
<rect x="10" y="62.4" width="1.5" height="1.8" fill="#b3b6b3"/>
<rect x="13" y="62.4" width="1.5" height="1.8" fill="#b3b6b3"/>
<rect x="16" y="62.4" width="1.5" height="1.8" fill="#b3b6b3"/>
<rect x="19" y="62.4" width="1.5" height="1.8" fill="#b3b6b3"/>
<rect x="22" y="62.4" width="1.5" height="1.8" fill="#b3b6b3"/>
<rect x="25" y="62.4" width="1.5" height="1.8" fill="#b3b6b3"/>
<rect x="28" y="62.4" width="1.5" height="1.8" fill="#b3b6b3"/>
<rect x="31" y="62.4" width="1.5" height="1.8" fill="#b3b6b3"/>
<rect x="34" y="62.4" width="1.5" height="1.8" fill="#b3b6b3"/>
<rect x="37" y="62.4" width="1.5" height="1.8" fill="#b3b6b3"/>
<rect x="40" y="62.4" width="1.5" height="1.8" fill="#b3b6b3"/>
<line x1="2" y1="104.5" x2="43" y2="104.5" stroke="#b4b7b4" stroke-width="1"/>
<line x1="2" y1="105.5" x2="43" y2="105.5" stroke="#e4e7e4" stroke-width="1"/>
<line x1="2" y1="173.5" x2="43" y2="173.5" stroke="#b4b7b4" stroke-width="1"/>
<line x1="2" y1="174.5" x2="43" y2="174.5" stroke="#e4e7e4" stroke-width="1"/>
<line x1="2" y1="225" x2="43" y2="225" stroke="#b4b7b4" stroke-width="1"/>
<line x1="2" y1="226" x2="43" y2="226" stroke="#e4e7e4" stroke-width="1"/>
<line x1="2" y1="262" x2="43" y2="262" stroke="#b4b7b4" stroke-width="1"/>
<line x1="2" y1="263" x2="43" y2="263" stroke="#e4e7e4" stroke-width="1"/>
<line x1="2" y1="280.5" x2="43" y2="280.5" stroke="#b4b7b4" stroke-width="1"/>
<line x1="2" y1="281.5" x2="43" y2="281.5" stroke="#e4e7e4" stroke-width="1"/>
<line x1="2" y1="314.5" x2="43" y2="314.5" stroke="#b4b7b4" stroke-width="1"/>
<line x1="2" y1="315.5" x2="43" y2="315.5" stroke="#e4e7e4" stroke-width="1"/>
<line x1="2" y1="357.5" x2="43" y2="357.5" stroke="#b4b7b4" stroke-width="1"/>
<line x1="2" y1="358.5" x2="43" y2="358.5" stroke="#e4e7e4" stroke-width="1"/>
<line x1="2" y1="373.5" x2="43" y2="373.5" stroke="#b4b7b4" stroke-width="1"/>
<line x1="2" y1="374.5" x2="43" y2="374.5" stroke="#e4e7e4" stroke-width="1"/>
<line x1="2" y1="388.5" x2="43" y2="388.5" stroke="#b4b7b4" stroke-width="1"/>
<line x1="2" y1="389.5" x2="43" y2="389.5" stroke="#e4e7e4" stroke-width="1"/>
<rect x="4.5" y="71.5" width="17.5" height="16" fill="#a9c9ea" stroke="#8db3dd" stroke-width="1"/>
<path d="M10.00 74.60L10.00 84.00L12.30 82.00L14.00 85.80L15.60 85.10L13.90 81.40L16.80 81.20Z" fill="url(#arr)" stroke="#111" stroke-width="0.5" stroke-linejoin="round"/>
<path d="M29.00 74.60L29.00 83.53L31.18 81.63L32.80 85.24L34.32 84.57L32.70 81.06L35.46 80.87Z" fill="#fafafa" stroke="#111" stroke-width="1" stroke-linejoin="round"/>
<path d="M41.4 84.0v2.900h-2.900z" fill="#111"/>
<g stroke="#161616" fill="none"><path d="M12 94.900l6.300 6" stroke-width="1.700" stroke-linecap="round"/><path d="M10.400 89.600v2.200M10.400 94.800v2.200M6.600 93.300h2.300M11.900 93.300h2.300M7.700 90.600l1.500 1.500M13.100 90.600l-1.500 1.500M7.700 96l1.500-1.500" stroke-width=".8"/></g>
<g stroke="#161616" fill="none" stroke-width="1.200" stroke-linecap="round"><ellipse cx="32.800" cy="93.700" rx="6" ry="3.300" transform="rotate(-6 32.800 93.700)"/><path d="M28.600 96.300c-1.200.8-1.300 1.900-.5 2.600s.6 1.700-.2 2.600" stroke-width="1"/></g>
<path d="M32 94.400l6.200 3.600-2.700.6 1.100 2.500-1.400.6-1.100-2.500-2 1.600z" fill="#fafafa" stroke="#111" stroke-width="0.8" stroke-linejoin="round"/>
<g stroke="#161616" stroke-width=".9" stroke-linejoin="round"><path d="M12.800 108.600l3.400 6.700-1 2.900h-4.800l-1-2.900z" fill="#f6f6f6"/><path d="M12.800 109.500v4.600" fill="none"/><circle cx="12.800" cy="114.900" r=".9" fill="#161616"/><rect x="10.300" y="118.400" width="5" height="2.800" fill="#161616"/></g>
<path d="M22.4 119.9v2.900h-2.900z" fill="#111"/>
<text x="28" y="120.300" font-size="15.300" fill="#161616" style="font-family:'Liberation Serif',serif" stroke="#161616" stroke-width=".22">T</text>
<path d="M41.4 119.9v2.900h-2.900z" fill="#111"/>
<line x1="7.6" y1="127" x2="19.2" y2="136.6" stroke="#161616" stroke-width="1.3"/>
<path d="M22.4 136.1v2.900h-2.900z" fill="#111"/>
<ellipse cx="32.700" cy="131.300" rx="5.300" ry="4.200" fill="url(#ell)" stroke="#444" stroke-width=".9"/>
<path d="M28 133.500a5.300 4.200 0 0 0 9.700-1.200" fill="none" stroke="#222" stroke-width="1.2"/>
<path d="M41.4 136.1v2.900h-2.900z" fill="#111"/>
<g stroke="#161616" stroke-linecap="round" stroke-linejoin="round"><path d="M19.800 142.600l-5 5.600" stroke-width="1.500"/><path d="M15.400 147.200c.9.900.3 2.300-1.400 3.700-1.700 1.300-3.900 1.900-6.200 1.900 1.600-.8 2.600-1.900 3.600-3.300 1.200-1.700 2.700-2.800 4-2.300z" fill="#8a8c8a" stroke-width=".9"/></g>
<g stroke="#161616" stroke-width=".9" fill="#f4f4f4" stroke-linejoin="round"><path d="M34.800 143l2.300 2.200-7.600 7.200-2.900 1 .8-3.100z"/><path d="M27.400 150.300l2.100 2.100M33.300 144.400l2.300 2.200" fill="none"/><path d="M26.600 153.400l1.200-.4-.8-.8z" fill="#161616"/></g>
<path d="M41.4 152.1v2.900h-2.900z" fill="#111"/>
<g stroke="#161616" stroke-width=".9" stroke-linejoin="round"><path d="M6.400 162.400l4.700-2.300 8 2.100v3.400l-4.300 3.700h-8.400z" fill="#f4f4f4"/><path d="M6.400 169.300h8.400l4.300-3.700" fill="none" stroke-width="1.600"/><path d="M10.800 165.200c1.700-.3 3.400-1.700 5-3.300" fill="none" stroke-width="2" stroke-linecap="round"/><path d="M15.600 162l4.500-4" stroke-width="1.200" stroke-linecap="round"/></g>
<g stroke="#161616" fill="none" stroke-width="1"><circle cx="27.800" cy="161.600" r="1.500"/><circle cx="28.300" cy="166.500" r="1.500"/><path d="M29.100 162.400l10.100 4.500M29.600 165.700l9.600-4.400" stroke-width="1.200" stroke-linecap="round"/></g>
<path d="M41.4 168.3v2.900h-2.900z" fill="#111"/>
<g stroke="#161616" fill="none" stroke-width="1.100"><circle cx="13.400" cy="183.700" r="4.500" stroke-dasharray="1.300 1.400"/><path d="M17.900 183.700a4.500 4.500 0 0 0-6.700-3.900" stroke-width="1.300"/><path d="M9.300 181.200l3.400-2.600.6 3.400z" fill="#161616" stroke="none"/></g>
<path d="M22.4 188.1v2.900h-2.900z" fill="#111"/>
<g stroke="#161616" stroke-width=".9"><rect x="26.700" y="178.300" width="9.700" height="6.800" fill="#f4f4f4"/><path d="M26.700 178.600h9.700" stroke-width="1.500"/><path d="M28.400 180.400l3.600 2.800M32 183.200v-2.200M32 183.200h-2.300" fill="none"/><rect x="33.800" y="183.700" width="5" height="3.900" fill="#d8dad8" stroke="#555"/></g>
<path d="M41.4 188.1v2.900h-2.900z" fill="#111"/>
<g stroke="#161616" fill="none" stroke-width="1.200" stroke-linecap="round"><path d="M6.600 198.600c2.500-2.200 4-1.200 5 .8s2.600 3.600 6.200 2.200"/><path d="M8.600 202.400c2-1.400 3.600-.6 4.600 1"/><path d="M15.600 195c1.600.8 2.200 2.200 1.400 3.600M12.600 194.600c1 1.400.8 3-.4 4.400" stroke-width="1"/><path d="M14.600 200.200l6 5.200" stroke-width="1.400"/><circle cx="20.800" cy="205.600" r="1" fill="#161616"/></g>
<g stroke="#161616" fill="none" stroke-width="1.500" stroke-dasharray="2 1.300"><rect x="29.400" y="195.600" width="9.200" height="7.800"/></g>
<path d="M26.20 195.00L26.20 202.33L27.99 200.77L29.32 203.74L30.57 203.19L29.24 200.30L31.50 200.15Z" fill="#111" stroke="#e8e8e8" stroke-width="0.3" stroke-linejoin="round"/>
<g stroke="#161616" stroke-width=".9" fill="#f4f4f4"><path d="M8 212c0-1.800 2.200-2.400 3.600-1.600 1.600-1 4.200-.4 4.400 1.600.8 1.600-.2 3.400-2 3.800-1.400 1.600-4 1.600-5.200.2-2-.4-2.600-2.800-.8-4z"/></g>
<path d="M14.600 215.400l5.200 4.200-2.200.3 1 2.500-1.200.5-1-2.500-1.800 1.500z" fill="#fafafa" stroke="#111" stroke-width="0.8" stroke-linejoin="round"/>
<path d="M22.4 221.1v2.900h-2.900z" fill="#111"/>
<path d="M26.400 220.600l7.400-1.600 5.400 2.200-6.600 2z" fill="url(#pgf)"/><g stroke="#3a3a3a" stroke-width=".8" fill="none"><path d="M26.400 209.500l7.400 2.400v7.100l-7.400 1.600z" fill="#e4e6e4"/><path d="M28.900 210.300v9.700M31.400 211.100v8.300M26.400 213.200l7.400 1.600M26.400 216.900l7.400.6"/></g>
<path d="M41.4 221.1v2.900h-2.900z" fill="#111"/>
<g stroke="#161616" stroke-width=".9" fill="none"><rect x="7" y="230.500" width="11.600" height="9" fill="#eeeeee"/><path d="M7 234.800c3-1.800 5.500 1.600 11.600-.6M11 230.500c1.600 3 .2 5.600.8 9M14.800 230.500c-1.200 3.400 1.200 5.400.4 9"/></g>
<rect x="26.500" y="230.500" width="12.500" height="9" fill="url(#tg)" stroke="#333" stroke-width="0.9"/>
<g stroke="#161616" stroke-linecap="round"><path d="M7.400 258.600l6.600-6.800" stroke-width="1.700"/><path d="M13.400 252.400l3.600-3.800" stroke-width="3.200"/><path d="M12.400 249.600l3.800 3.800" stroke-width="1.300"/><path d="M8 258l5.400-5.600" stroke="#e6e6e6" stroke-width=".6"/></g>
<path d="M22.4 257.600v2.900h-2.900z" fill="#111"/>
<g stroke="#333" stroke-width=".9"><rect x="26.500" y="245.500" width="4.800" height="4.800" fill="#f4f4f4"/><path d="M30 250l5 5" stroke="#9a9c9a" stroke-dasharray="1.200 1"/><circle cx="35.600" cy="254.400" r="2.400" fill="#f4f4f4"/></g>
<g stroke="#161616" stroke-width=".9" fill="#f0f0f0"><path d="M10.600 268.200h6.400v8.400h-6.400z"/><path d="M11.800 268.200v-2.200h4v2.200" /><circle cx="13.800" cy="272.600" r="1.800" fill="#cfd1cf"/><path d="M6.400 263.600l1.400 1M6.200 266l1.600.2M8.600 263l.8 1.400" fill="none"/></g>
<path d="M22.4 275.600v2.900h-2.900z" fill="#111"/>
<g fill="#555" stroke="#161616" stroke-width=".7"><path d="M26.500 265v11.500h12.500" fill="none" stroke-width="1"/><rect x="28.400" y="270" width="2.200" height="6"/><rect x="31.600" y="267" width="2.200" height="9"/><rect x="34.800" y="271.500" width="2.200" height="4.500"/></g>
<path d="M41.4 275.600v2.900h-2.900z" fill="#111"/>
<g stroke="#161616" stroke-width=".9" fill="none"><rect x="9" y="286" width="8" height="8" fill="#e8eae8"/><path d="M7 286h1.200M17.800 286h1.200M7 294h1.200M17.800 294h1.200M9 284v1.200M17 284v1.200M9 294.800v1.200M17 294.800v1.200"/></g>
<g stroke="#161616" stroke-linecap="round"><path d="M27.400 296.400c1.200-3.200 3.600-5.400 6.200-7.200l1.600 1.600c-2.400 2-4.800 4-7.800 5.600z" fill="#e8e8e8" stroke-width=".8"/><path d="M34 289.600l4.600-5.600" stroke-width="1.500"/><path d="M31.600 286l5 4.600" stroke-width="1"/></g>
<path d="M41.4 294.600v2.900h-2.900z" fill="#111"/>
<g stroke="#161616" stroke-width=".9" fill="#f8f8f8" stroke-linejoin="round"><path d="M9.600 311.600c-1.200-1.800-2.400-3.400-3.200-5 -.4-1 .8-1.600 1.500-.8l1.500 1.700v-5.100c0-1.100 1.500-1.100 1.600 0l.2 3v-4c0-1.100 1.600-1.100 1.700 0l.1 3.800.3-3.200c.1-1 1.600-1 1.600.1l-.1 3.600.6-2c.3-.9 1.600-.6 1.500.4l-.6 4.600c-.2 1.400-.8 2.200-1.400 2.900z"/></g>
<path d="M22.4 310.600v2.900h-2.900z" fill="#111"/>
<g stroke="#161616" fill="none"><circle cx="29.800" cy="303.800" r="3.200" stroke-width="1.100" fill="#f0f2f0"/><path d="M32.300 306.300l4.700 4.700" stroke-width="2" stroke-linecap="round"/></g>
<rect x="17.5" y="331.5" width="21" height="21" fill="#fbfcfb" stroke="#2a2a2a" stroke-width="1"/>
<rect x="23.5" y="337.5" width="9" height="9" fill="#d4d7d4" stroke="#2a2a2a" stroke-width="1"/>
<line x1="18" y1="352" x2="38" y2="332" stroke="#b80f2e" stroke-width="1.8"/>
<rect x="7.5" y="320.5" width="21" height="21" fill="url(#gf)" stroke="#2a2a2a" stroke-width="1"/>
<rect x="8.5" y="321.5" width="19" height="19" fill="url(#chk)" mask="url(#chkm)" opacity=".8"/>
<rect x="8.5" y="321.5" width="19" height="19" fill="none" stroke="#f2f3f2" stroke-width="0.8"/>
<g stroke="#161616" stroke-width=".9" fill="none"><path d="M33.600 322.200c2.400.2 3.800 1.600 4 4"/><path d="M32.400 322.200l2-1.500v3zM37.600 327.400l-1.500-2h3z" fill="#161616" stroke="none"/></g>
<rect x="9.5" y="347.5" width="5" height="5" fill="#111" stroke="#111" stroke-width="0.8"/>
<rect x="6.5" y="344.5" width="5" height="5" fill="#fbfcfb" stroke="#111" stroke-width="0.9"/>
<rect x="4.5" y="360.5" width="9" height="9" fill="#0a0a0a" stroke="#f2f3f2" stroke-width="0.8"/>
<rect x="16.5" y="358.5" width="13.5" height="14" fill="#a9c9ea" stroke="#8db3dd" stroke-width="1"/>
<rect x="19" y="361" width="8.5" height="9" fill="url(#gb)" stroke="#555" stroke-width="0.6"/>
<rect x="32.500" y="360.5" width="9" height="9" fill="#fbfcfb" stroke="#9a9d9a" stroke-width="0.8"/>
<line x1="33" y1="369" x2="41" y2="361" stroke="#b80f2e" stroke-width="1.6"/>
<rect x="2.5" y="374.8" width="13.5" height="13" fill="#a9c9ea" stroke="#8db3dd" stroke-width="1"/>
<rect x="8.1" y="381.2" width="5.6" height="4.8" fill="#8e918e" stroke="#222" stroke-width="0.8"/>
<circle cx="7.6" cy="380" r="3.900" fill="url(#dm)" stroke="#222" stroke-width=".9"/>
<rect x="22.1" y="381.2" width="5.6" height="4.8" fill="#8e918e" stroke="#222" stroke-width="0.8"/>
<circle cx="21.6" cy="380" r="3.900" fill="url(#dm)" stroke="#222" stroke-width=".9"/>
<circle cx="36" cy="380.600" r="3.300" fill="url(#dm)" stroke="#8a8d8a" stroke-width=".8"/>
<rect x="19.5" y="393.5" width="11" height="7.500" fill="#f2f3f2" stroke="#333" stroke-width="0.9"/>
<rect x="15" y="397" width="11" height="7" fill="#fafbfa" stroke="#333" stroke-width="0.9"/>
<g fill="none" stroke-linejoin="round" stroke-linecap="round"><g stroke="#6a6d6a" stroke-opacity=".28"><g stroke-width="3.3"><text x="833 879 925" y="63.8" font-size="47.5" font-weight="bold">虎课网</text></g><path d="M762 31.500c7-3 15 0 15 9v17c0 5 3 8.500 8.500 8.500h40c4 0 6.500-2.500 6.500-6.500v-27c0-4-2.500-6.500-6.500-6.500l-3-4.500-5 4.500h-14l-5-4.500-3.500 4.500h-4c-4 0-6.500 2.500-6.500 6.500M762 37c4.500-1.500 9 .5 9 6v15c0 8 5 13 13 13M790 36.500h21M790 43h21M790 49.500h10M790 43v19.500h10M803.500 49.500v12l9.500-6z" stroke-width="3.4"/></g><g stroke="#ffffff" stroke-opacity=".52"><g stroke-width="1.6"><text x="833 879 925" y="63.8" font-size="47.5" font-weight="bold">虎课网</text></g><path d="M762 31.500c7-3 15 0 15 9v17c0 5 3 8.500 8.500 8.500h40c4 0 6.500-2.500 6.500-6.500v-27c0-4-2.500-6.500-6.500-6.500l-3-4.500-5 4.500h-14l-5-4.500-3.500 4.500h-4c-4 0-6.500 2.500-6.500 6.500M762 37c4.500-1.500 9 .5 9 6v15c0 8 5 13 13 13M790 36.500h21M790 43h21M790 49.500h10M790 43v19.500h10M803.500 49.500v12l9.500-6z" stroke-width="1.8"/></g></g>
</svg>
</body></html>
